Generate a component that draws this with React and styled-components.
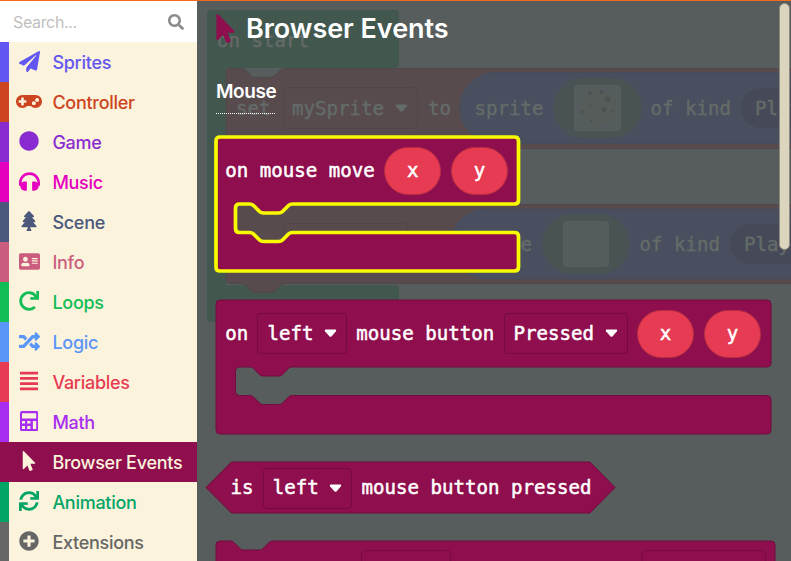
import React from "react";
import styled, { createGlobalStyle } from "styled-components";
import {
  FaPaperPlane, FaCircle, FaHeadphones, FaTree, FaAddressCard, FaRedo,
  FaRandom, FaMousePointer, FaSync, FaPlusCircle, FaSearch,
} from "react-icons/fa";

const BERRY = "#8f0e4d";
const CREAM = "#fcf3dc";

const GlobalStyle = createGlobalStyle`
  *, *::before, *::after { box-sizing: border-box; }
  body { margin: 0; overflow: hidden; font-family: Inter, "Liberation Sans", sans-serif; }
`;

const Editor = styled.div`
  height: 561px;
  width: 791px;
  display: flex;
  overflow: hidden;
  border-top: 1px solid #f26a1b;
`;

const Toolbox = styled.nav`
  width: 197px;
  flex: none;
  background: ${CREAM};
`;

const SearchBox = styled.div`
  height: 41px;
  padding: 0 13px;
  display: flex;
  align-items: center;
  justify-content: space-between;
  background: #fff;
  color: #bfbfbf;
  font-size: 16px;
  letter-spacing: -0.35px;
  svg { color: #8c8c8c; margin-top: 1px; }
`;

const Category = styled.div`
  height: 40px;
  display: flex;
  align-items: center;
  border-left: 9px solid ${(p) => p.$color};
  background: ${(p) => (p.$active ? p.$color : "transparent")};
  color: ${(p) => (p.$active ? CREAM : p.$color)};
`;

const CategoryIcon = styled.span`
  width: 40px;
  height: 40px;
  flex: none;
  display: flex;
  align-items: center;
  justify-content: center;
  padding-bottom: 2px;
`;

const CategoryName = styled.span`
  margin-left: 3.4px;
  font-size: 18px;
  font-weight: 500;
  white-space: nowrap;
  letter-spacing: -0.28px;
`;

const Stage = styled.main`
  position: relative;
  flex: 1;
  overflow: hidden;
  background: #575d5c;
`;

const Dimmed = styled.div`
  position: absolute;
  inset: 0;
`;

const DimmedShapes = styled.svg`
  position: absolute;
  left: 0;
  top: 0;
`;

const DimmedText = styled.span`
  position: absolute;
  left: ${(p) => p.$x}px;
  top: ${(p) => p.$y}px;
  color: #646b68;
  font: 19.1px/24px "DejaVu Sans Mono", monospace;
  -webkit-text-stroke: 0.4px #646b68;
  white-space: pre;
`;

const Flyout = styled.section`
  position: relative;
  padding-left: 19px;
`;

const Heading = styled.h1`
  margin: 0 0 0 -5px;
  height: 54px;
  display: flex;
  align-items: center;
  gap: 6px;
  color: #fff;
  font-size: 27px;
  font-weight: 600;
  letter-spacing: -0.05px;
  white-space: nowrap;
  svg { color: ${BERRY}; flex: none; }
`;

const GroupLabel = styled.h2`
  margin: 21px 0 23.3px;
  width: 59px;
  height: 38px;
  padding-top: 4px;
  border-bottom: 1px dotted #fff;
  color: #fff;
  font-size: 19px;
  line-height: 24px;
  font-weight: 600;
  letter-spacing: -0.4px;
  white-space: nowrap;
`;

const Block = styled.div`
  position: relative;
  height: ${(p) => p.$h}px;
  margin-bottom: ${(p) => p.$gap}px;
  margin-left: ${(p) => p.$indent || 0}px;
`;

const BlockShape = styled.svg`
  position: absolute;
  left: 0;
  top: 0;
  overflow: visible;
`;

const BlockRow = styled.div`
  position: relative;
  height: ${(p) => p.$h || 67}px;
  padding-left: ${(p) => p.$pad || 9.2}px;
  padding-top: 1px;
  display: flex;
  align-items: center;
  gap: 9.3px;
  color: #fff;
  font: 19.1px/24px "DejaVu Sans Mono", monospace;
  -webkit-text-stroke: 0.5px #fff;
  white-space: pre;
`;

const Field = styled.span`
  height: 41px;
  width: ${(p) => p.$w}px;
  padding: 0 9px;
  display: flex;
  flex: none;
  align-items: center;
  justify-content: space-between;
  border: 1px solid #720b3e;
  border-radius: 4px;
`;

const Variable = styled.span`
  width: 57.5px;
  height: 48px;
  flex: none;
  display: flex;
  align-items: center;
  justify-content: center;
  border: 1px solid #b72e42;
  border-radius: 24px;
  background: #e63b52;
`;

const Scrollbar = styled.div`
  position: absolute;
  right: 1px;
  top: 2px;
  width: 11px;
  height: 247px;
  border-radius: 6px;
  background: #dcd5bd;
  border: 1px solid #8d8b80;
`;

const Arrow = ({ color = "#fff" }) => (
  <svg width="13" height="9" viewBox="0 0 13 9">
    <path d="M1.5.5h10q1.3.3.4 1.7L7.7 7.2q-1.2 1.3-2.4 0L1 2.2Q.2.8 1.5.5Z" fill={color} />
  </svg>
);

const Calculator = () => (
  <svg width="18" height="20" viewBox="0 0 18 20" fill="currentColor" fillRule="evenodd">
    <path d="M2 0h14.300q1.900 0 1.900 2v16.200q0 2-1.900 2H2q-2 0-2-2V2Q0 0 2 0ZM2 2.200v5.300h14.200V2.200ZM2 10v2.600h3V10ZM7.200 10v2.600h3.200V10ZM12.900 10v8h3.300v-8ZM2 15v3h3v-3ZM7.200 15v3h3.200v-3Z" />
  </svg>
);

const Lines = () => (
  <svg width="18" height="20" viewBox="0 0 18 20" fill="currentColor">
    <path d="M0 .7h18v2.700H0zM0 6h18v2.700H0zM0 11.300h18V14H0zM0 16.600h18v2.700H0z" />
  </svg>
);

const Gamepad = () => (
  <svg width="26" height="21" viewBox="0 0 640 512" fill="currentColor">
    <path d="M480 96H160C71.600 96 0 167.600 0 256s71.600 160 160 160c44.800 0 85.200-18.400 114.200-48h91.500c29 29.500 69.500 48 114.200 48 88.400 0 160-71.600 160-160S568.400 96 480 96zM256 276c0 6.600-5.400 12-12 12h-52v52c0 6.600-5.400 12-12 12h-40c-6.600 0-12-5.400-12-12v-52H76c-6.600 0-12-5.400-12-12v-40c0-6.600 5.400-12 12-12h52v-52c0-6.600 5.400-12 12-12h40c6.600 0 12 5.400 12 12v52h52c6.600 0 12 5.400 12 12v40zm184 68c-26.500 0-48-21.500-48-48s21.500-48 48-48 48 21.500 48 48-21.500 48-48 48zm80-80c-26.500 0-48-21.500-48-48s21.500-48 48-48 48 21.500 48 48-21.500 48-48 48z" />
  </svg>
);

const categories = [
  ["Sprites", "#6257f2", <FaPaperPlane size={21} />],
  ["Controller", "#cd4420", <Gamepad />],
  ["Game", "#8a2bd2", <FaCircle size={20} />],
  ["Music", "#e500c0", <FaHeadphones size={21} />],
  ["Scene", "#4b587c", <FaTree size={20} />],
  ["Info", "#cb5e7e", <FaAddressCard size={21} />],
  ["Loops", "#12bd55", <FaRedo size={20} />],
  ["Logic", "#5a95f8", <FaRandom size={21} />],
  ["Variables", "#e63b52", <Lines />],
  ["Math", "#a82df0", <Calculator />],
  ["Browser Events", BERRY, <FaMousePointer size={20} />],
  ["Animation", "#03a567", <FaSync size={20} />],
  ["Extensions", "#666666", <FaPlusCircle size={20} />],
];

const notchBack = "c-2 0-3 .5-4 1.5l-6 6c-1 1-2 1.5-4 1.5h-15c-2 0-3-.5-4-1.5l-6-6c-1-1-2-1.5-4-1.5";
const eventPath = (w) =>
  `M4 0H${w - 4}q4 0 4 4V63q0 4-4 4H76.500${notchBack}H23.500q-4 0-4 4V91.500q0 4 4 4H33.500` +
  `c2 0 3 .5 4 1.500l6 6c1 1 2 1.500 4 1.500h15c2 0 3-.5 4-1.500l6-6c1-1 2-1.500 4-1.500` +
  `H${w - 4}q4 0 4 4V130q0 4-4 4H4q-4 0-4-4V4Q0 0 4 0Z`;

const EventBlock = ({ w, gap, selected, children }) => (
  <Block $h={134} $gap={gap}>
    <BlockShape width={w} height="134">
      <path
        d={eventPath(w)}
        fill={BERRY}
        stroke={selected ? "#f8fb00" : "#720b3e"}
        strokeWidth={selected ? 3.7 : 1}
      />
    </BlockShape>
    <BlockRow>{children}</BlockRow>
  </Block>
);

const Workspace = () => (
  <Dimmed>
    <DimmedShapes width="594" height="560" viewBox="197 1 594 560">
      <defs>
        <pattern id="dots" x="512" y="29" width="36" height="36" patternUnits="userSpaceOnUse">
          <rect width="1" height="1" fill="#525958" />
        </pattern>
      </defs>
      <rect x="197" width="594" height="561" fill="url(#dots)" />
      <path d="M211 10H395q4 0 4 4V64q0 4-4 4H226V285H395q4 0 4 4V318q0 4-4 4H211q-4 0-4-4V14q0-4 4-4Z" fill="#42584f" />
      <g fill="#574b4e" stroke="#51474a">
        <path d="M230 68.500H240c5 0 6 2 8 4 3 4 5 5 8 5H269c4 0 6-2 9-5 2-2 4-4 8-4H800V148.500H226V72q0-3.500 4-3.500Z" />
        <path d="M226 148H510V204.500H800V283.500H286c-4 0-6 2-8 4-3 4-5 5-8 5H256c-3 0-5-1-8-5-2-2-3-4-8-4H230q-4 0-4-4Z" />
      </g>
      <g fill="none" stroke="#50464a">
        <rect x="283.500" y="87.500" width="134" height="41" rx="4" />
        <rect x="283.500" y="223.500" width="124" height="41" rx="4" />
      </g>
      <g fill="#4a4f5f" stroke="#464c5b">
        <rect x="460" y="72.500" width="380" height="71" rx="35.500" />
        <rect x="451" y="209" width="380" height="70" rx="35" />
      </g>
      <g fill="#4a5354">
        <rect x="553" y="78" width="89" height="60" rx="30" />
        <rect x="542" y="214" width="88" height="60" rx="30" />
      </g>
      <g fill="#545c5d">
        <rect x="574" y="85" width="47" height="46" rx="3" />
        <rect x="563" y="221" width="46" height="46" rx="3" />
      </g>
      <circle cx="598" cy="108" r="18" fill="#565c5a" />
      <g fill="#4e5052">
        <circle cx="590" cy="93" r="1.800" /><circle cx="601.500" cy="92" r="1.800" />
        <circle cx="607.500" cy="99.500" r="2.800" /><circle cx="604" cy="109.500" r="2.500" />
        <circle cx="582" cy="111.500" r="1.700" /><circle cx="613" cy="111.500" r="1.300" />
        <circle cx="591.500" cy="120.500" r="1.500" /><circle cx="590" cy="105" r="1" />
      </g>
      <g fill="#464a58">
        <rect x="741" y="88" width="80" height="40" rx="20" />
        <rect x="730" y="224" width="80" height="40" rx="20" />
      </g>
      <path d="M396.500 104.500h10q1.300.300.400 1.700l-4.200 5q-1.200 1.300-2.400 0l-4.300-5q-.8-1.400.5-1.700Z" fill="#646b68" />
    </DimmedShapes>
    <DimmedText $x={20} $y={28}>on start</DimmedText>
    <DimmedText $x={39} $y={96}>set</DimmedText>
    <DimmedText $x={95} $y={96}>mySprite</DimmedText>
    <DimmedText $x={231} $y={96}>to</DimmedText>
    <DimmedText $x={277.5} $y={96}>sprite</DimmedText>
    <DimmedText $x={453.5} $y={96}>of kind</DimmedText>
    <DimmedText $x={558} $y={96}>Player</DimmedText>
    <DimmedText $x={266} $y={232}>sprite</DimmedText>
    <DimmedText $x={442.5} $y={232}>of kind</DimmedText>
    <DimmedText $x={547} $y={232}>Player</DimmedText>
  </Dimmed>
);

export default function App() {
  return (
    <>
      <GlobalStyle />
      <Editor>
        <Toolbox>
          <SearchBox>Search...<FaSearch size={16} /></SearchBox>
          {categories.map(([name, color, icon]) => (
            <Category key={name} $color={color} $active={name === "Browser Events"}>
              <CategoryIcon>{icon}</CategoryIcon>
              <CategoryName>{name}</CategoryName>
            </Category>
          ))}
        </Toolbox>
        <Stage>
          <Workspace />
          <Flyout>
            <Heading><FaMousePointer size={29} />Browser Events</Heading>
            <GroupLabel>Mouse</GroupLabel>
            <EventBlock w={302.5} gap={28.5} selected>
              <span>on mouse move</span>
              <Variable>x</Variable>
              <Variable>y</Variable>
            </EventBlock>
            <EventBlock w={555} gap={28.5}>
              <span>on</span>
              <Field $w={89.5}>left<Arrow /></Field>
              <span>mouse button</span>
              <Field $w={124}>Pressed<Arrow /></Field>
              <Variable>x</Variable>
              <Variable>y</Variable>
            </EventBlock>
            <Block $h={51} $gap={28.2} $indent={-10}>
              <BlockShape width="409" height="51">
                <path d="M25.500 0H384L409 25.500L384 51H25.500L0 25.500Z" fill={BERRY} stroke="#720b3e" />
              </BlockShape>
              <BlockRow $h={51} $pad={24.5}>
                <span>is</span>
                <Field $w={89.5}>left<Arrow /></Field>
                <span>mouse button pressed</span>
              </BlockRow>
            </Block>
            <Block $h={60} $gap={0}>
              <BlockShape width="559" height="60">
                <path d="M4 0H14c2 0 3 .5 4 1.500l6 6c1 1 2 1.500 4 1.500H43c2 0 3-.5 4-1.500l6-6c1-1 2-1.500 4-1.500H555q4 0 4 4V60H0V4Q0 0 4 0Z" fill={BERRY} stroke="#720b3e" />
                <g fill="none" stroke="#720b3e">
                  <rect x="145.500" y="9.500" width="89" height="41" rx="4" />
                  <rect x="426" y="9.500" width="123.500" height="41" rx="4" />
                </g>
              </BlockShape>
            </Block>
          </Flyout>
          <Scrollbar />
        </Stage>
      </Editor>
    </>
  );
}
